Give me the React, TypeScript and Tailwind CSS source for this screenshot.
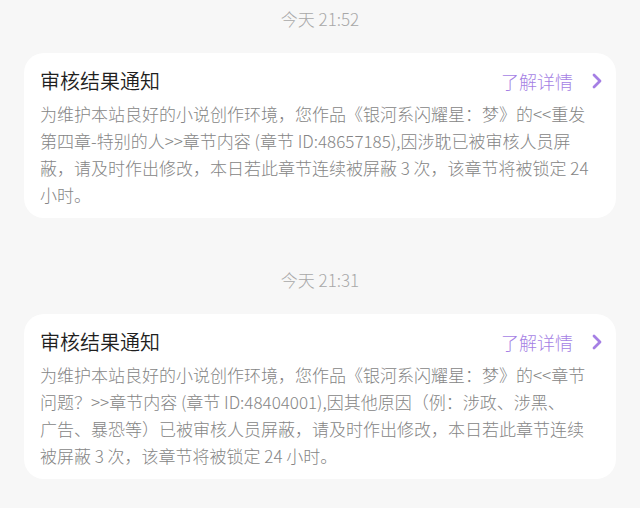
const notices = [
  {
    time: "今天 21:52",
    title: "审核结果通知",
    lines: [
      "为维护本站良好的小说创作环境，您作品《银河系闪耀星：梦》的<<重发",
      "第四章-特别的人>>章节内容 (章节 ID:48657185),因涉耽已被审核人员屏",
      "蔽，请及时作出修改，本日若此章节连续被屏蔽 3 次，该章节将被锁定 24",
      "小时。",
    ],
  },
  {
    time: "今天 21:31",
    title: "审核结果通知",
    lines: [
      "为维护本站良好的小说创作环境，您作品《银河系闪耀星：梦》的<<章节",
      "问题？>>章节内容 (章节 ID:48404001),因其他原因（例：涉政、涉黑、",
      "广告、暴恐等）已被审核人员屏蔽，请及时作出修改，本日若此章节连续",
      "被屏蔽 3 次，该章节将被锁定 24 小时。",
    ],
  },
];

function Chevron() {
  return (
    <svg width="12" height="16" viewBox="0 0 12 16" fill="none">
      <path d="M3 2 L9 8 L3 14" stroke="#a57fe4" strokeWidth="2.8" strokeLinecap="round" strokeLinejoin="round" />
    </svg>
  );
}

export default function App() {
  return (
    <div
      className="min-h-[508px] w-[640px] bg-[#f7f7f7] pt-[8px]"
      style={{ fontFamily: '"Noto Sans CJK SC", "Noto Sans", sans-serif' }}
    >
      <div className="flex flex-col gap-[51px]">
        {notices.map((n) => (
          <section key={n.time}>
            <p className="text-center text-[17px] font-light leading-[22px] text-[#a8a8a8]">{n.time}</p>
            <div className="mx-6 mt-[23px] rounded-[20px] bg-white pb-[10px] pl-4 pr-[13px] pt-[14px]">
              <div className="flex h-[28px] items-center justify-between">
                <h3 className="text-[20px] font-[350] leading-[28px] text-[#1f1f1f]">{n.title}</h3>
                <div className="flex items-center gap-[18px]">
                  <span className="text-[18px] font-light leading-[28px] text-[#a57fe4]">了解详情</span>
                  <Chevron />
                </div>
              </div>
              <div className="mt-[5px] text-[17px] font-light leading-[27px] text-[#858585]">
                {n.lines.map((line) => (
                  <p key={line} className="whitespace-nowrap">
                    {line}
                  </p>
                ))}
              </div>
            </div>
          </section>
        ))}
      </div>
    </div>
  );
}
